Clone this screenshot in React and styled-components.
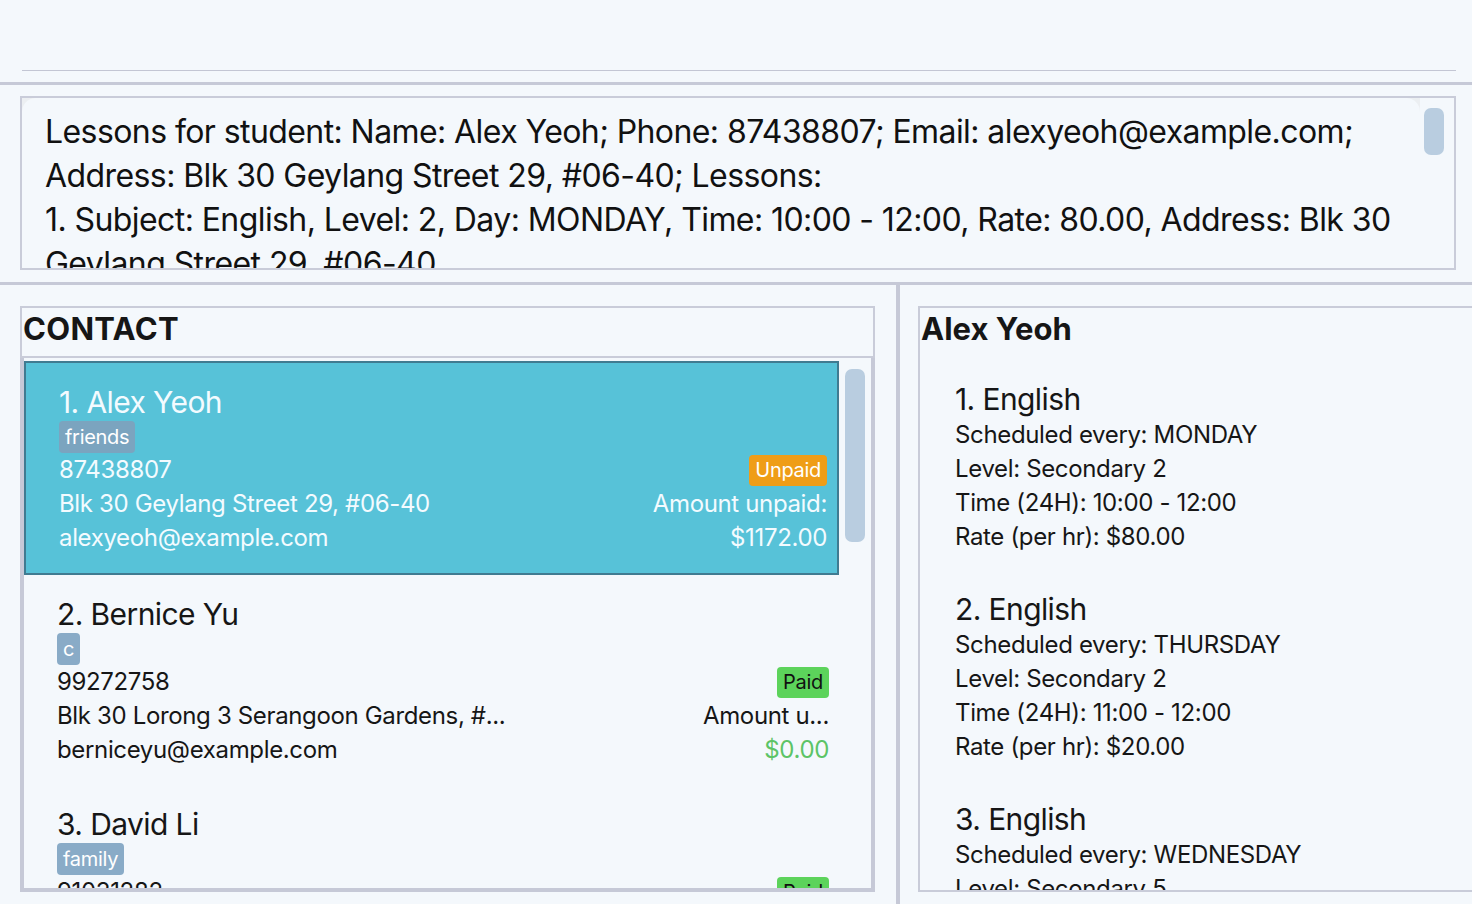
import React from "react";
import styled, { createGlobalStyle, css } from "styled-components";

const GlobalStyle = createGlobalStyle`
  html, body { margin: 0; padding: 0; background: #f4f8fc; }
  body { font-family: Inter, "Noto Sans", sans-serif; color: #161616; }
  #root { width: 1472px; height: 904px; overflow: hidden; }
  * { box-sizing: border-box; }
`;

const LINE = "#c6c9d7";

const Window = styled.div`
  display: flex;
  flex-direction: column;
  width: 1472px;
  height: 904px;
  overflow: hidden;
  background: #f4f8fc;
`;

const CommandArea = styled.div`
  height: 82px;
  flex-shrink: 0;
  padding: 0 16px 0 22px;
`;

const CommandField = styled.div`
  height: 71px;
  border-bottom: 1px solid #c3c6d4;
`;

const HRule = styled.div`
  height: 3px;
  flex-shrink: 0;
  background: ${LINE};
`;

const ResultArea = styled.div`
  height: 197px;
  flex-shrink: 0;
  padding: 11px 16px 12px 20px;
`;

const ResultBox = styled.div`
  height: 100%;
  border: 2px solid #c9ccd9;
  background: #eceff2;
  display: flex;
`;

const ResultText = styled.div`
  flex: 1;
  background: #f4f8fc;
  border-radius: 14px 14px 0 0;
  padding: 12px 0 0 23px;
  font-size: 32px;
  line-height: 44px;
  color: #111;
  overflow: hidden;
  letter-spacing: -0.58px;
`;

const TextLine = styled.div`
  white-space: nowrap;
`;

const ScrollTrack = styled.div`
  width: ${(p) => p.$w}px;
  flex-shrink: 0;
  background: #f4f8fc;
  padding: ${(p) => p.$pad};
`;

const Thumb = styled.div`
  width: 20px;
  height: ${(p) => p.$h}px;
  border-radius: 7px;
  background: #b9cde0;
`;

const Bottom = styled.div`
  flex: 1;
  display: flex;
  min-height: 0;
`;

const LeftPane = styled.div`
  width: 896px;
  flex-shrink: 0;
  padding: 21px 21px 12px 20px;
  display: flex;
  flex-direction: column;
`;

const VRule = styled.div`
  width: 4px;
  flex-shrink: 0;
  background: ${LINE};
`;

const RightPane = styled.div`
  flex: 1;
  padding: 21px 0 12px 18px;
  display: flex;
  flex-direction: column;
  min-width: 0;
`;

const PanelTitle = styled.div`
  height: 52px;
  flex-shrink: 0;
  padding: 0 0 0 1px;
  font-size: 31px;
  font-weight: 700;
  line-height: 42px;
  letter-spacing: ${(p) => p.$ls || "0px"};
  color: #161616;
  ${(p) =>
    p.$boxed &&
    css`
      border: 2px solid #c9ccd9;
    `}
`;

const ListBox = styled.div`
  flex: 1;
  min-height: 0;
  border: 4px solid ${LINE};
  border-top: none;
  padding-top: 3px;
  display: flex;
`;

const Cards = styled.div`
  flex: 1;
  overflow: hidden;
`;

const Card = styled.div`
  display: flex;
  justify-content: space-between;
  padding: 20px 10px 18px 33px;
  color: #161616;
  ${(p) =>
    p.$selected &&
    css`
      background: #57c2d8;
      border: 2px solid #407b91;
      color: #f3fbff;
    `}
`;

const Col = styled.div`
  display: flex;
  flex-direction: column;
  align-items: ${(p) => (p.$right ? "flex-end" : "flex-start")};
  padding-top: ${(p) => (p.$right ? "70px" : "0")};
  min-width: 0;
`;

const Name = styled.div`
  font-size: 30px;
  line-height: 38px;
  height: 38px;
  white-space: nowrap;
  letter-spacing: -0.6px;
`;

const TagRow = styled.div`
  height: 32px;
  display: flex;
  gap: 6px;
`;

const Tag = styled.span`
  height: 32px;
  padding: 0 6px;
  border-radius: 4px;
  background: ${(p) => (p.$selected ? "#7ba4bf" : "#89abc7")};
  color: #fff;
  font-size: 20px;
  line-height: 32px;
  letter-spacing: -0.3px;
`;

const Field = styled.div`
  font-size: 24px;
  line-height: 34px;
  height: 34px;
  white-space: nowrap;
  letter-spacing: -0.35px;
  color: ${(p) => p.$color || "inherit"};
`;

const BadgeRow = styled.div`
  height: 34px;
  display: flex;
  align-items: center;
`;

const Badge = styled.span`
  height: 31px;
  padding: 0 6px;
  border-radius: 4px;
  font-size: 20px;
  line-height: 31px;
  letter-spacing: -0.3px;
  ${(p) =>
    p.$paid
      ? css`
          background: #5cd35b;
          color: #111;
        `
      : css`
          background: #ef9d17;
          color: #fff;
        `}
`;

const DetailBox = styled.div`
  flex: 1;
  min-height: 0;
  display: flex;
  flex-direction: column;
  border: 2px solid #c9ccd9;
  border-right: none;
  overflow: hidden;
`;

const Lessons = styled.div`
  flex: 1;
  overflow: hidden;
`;

const Lesson = styled.div`
  padding: 20px 0 16px 35px;
  color: #161616;
`;

const contacts = [
  {
    name: "1. Alex Yeoh",
    tags: ["friends"],
    phone: "87438807",
    address: "Blk 30 Geylang Street 29, #06-40",
    email: "alexyeoh@example.com",
    paid: false,
    label: "Amount unpaid:",
    amount: "$1172.00",
    selected: true,
  },
  {
    name: "2. Bernice Yu",
    tags: ["c"],
    phone: "99272758",
    address: "Blk 30 Lorong 3 Serangoon Gardens, #...",
    email: "berniceyu@example.com",
    paid: true,
    label: "Amount u...",
    amount: "$0.00",
  },
  {
    name: "3. David Li",
    tags: ["family"],
    phone: "91031282",
    address: "Blk 436 Serangoon Gardens Street 26, #...",
    email: "lidavid@example.com",
    paid: true,
    label: "Amount u...",
    amount: "$0.00",
  },
];

const lessons = [
  { title: "1. English", day: "MONDAY", level: "Secondary 2", time: "10:00 - 12:00", rate: "$80.00" },
  { title: "2. English", day: "THURSDAY", level: "Secondary 2", time: "11:00 - 12:00", rate: "$20.00" },
  { title: "3. English", day: "WEDNESDAY", level: "Secondary 5", time: "14:00 - 16:00", rate: "$40.00" },
];

const resultLines = [
  "Lessons for student: Name: Alex Yeoh; Phone: 87438807; Email: alexyeoh@example.com;",
  "Address: Blk 30 Geylang Street 29, #06-40; Lessons:",
  "1. Subject: English, Level: 2, Day: MONDAY, Time: 10:00 - 12:00, Rate: 80.00, Address: Blk 30",
  "Geylang Street 29, #06-40",
];

export default function App() {
  return (
    <>
      <GlobalStyle />
      <Window>
        <CommandArea>
          <CommandField />
        </CommandArea>
        <HRule />
        <ResultArea>
          <ResultBox>
            <ResultText>
              {resultLines.map((l, i) => (
                <TextLine key={i}>{l}</TextLine>
              ))}
            </ResultText>
            <ScrollTrack $w={34} $pad="10px 0 0 4px">
              <Thumb $h={47} />
            </ScrollTrack>
          </ResultBox>
        </ResultArea>
        <HRule />
        <Bottom>
          <LeftPane>
            <PanelTitle $boxed $ls="0.3px">CONTACT</PanelTitle>
            <ListBox>
              <Cards>
                {contacts.map((c) => (
                  <Card key={c.name} $selected={c.selected}>
                    <Col>
                      <Name>{c.name}</Name>
                      <TagRow>
                        {c.tags.map((t) => (
                          <Tag key={t} $selected={c.selected}>
                            {t}
                          </Tag>
                        ))}
                      </TagRow>
                      <Field>{c.phone}</Field>
                      <Field>{c.address}</Field>
                      <Field>{c.email}</Field>
                    </Col>
                    <Col $right>
                      <BadgeRow>
                        <Badge $paid={c.paid}>{c.paid ? "Paid" : "Unpaid"}</Badge>
                      </BadgeRow>
                      <Field>{c.label}</Field>
                      <Field $color={c.paid ? "#5cc466" : undefined}>{c.amount}</Field>
                    </Col>
                  </Card>
                ))}
              </Cards>
              <ScrollTrack $w={32} $pad="8px 0 0 6px">
                <Thumb $h={173} />
              </ScrollTrack>
            </ListBox>
          </LeftPane>
          <VRule />
          <RightPane>
            <DetailBox>
              <PanelTitle>Alex Yeoh</PanelTitle>
              <Lessons>
                {lessons.map((l) => (
                  <Lesson key={l.title}>
                    <Name>{l.title}</Name>
                    <Field>Scheduled every: {l.day}</Field>
                    <Field>Level: {l.level}</Field>
                    <Field>Time (24H): {l.time}</Field>
                    <Field>Rate (per hr): {l.rate}</Field>
                  </Lesson>
                ))}
              </Lessons>
            </DetailBox>
          </RightPane>
        </Bottom>
      </Window>
    </>
  );
}
